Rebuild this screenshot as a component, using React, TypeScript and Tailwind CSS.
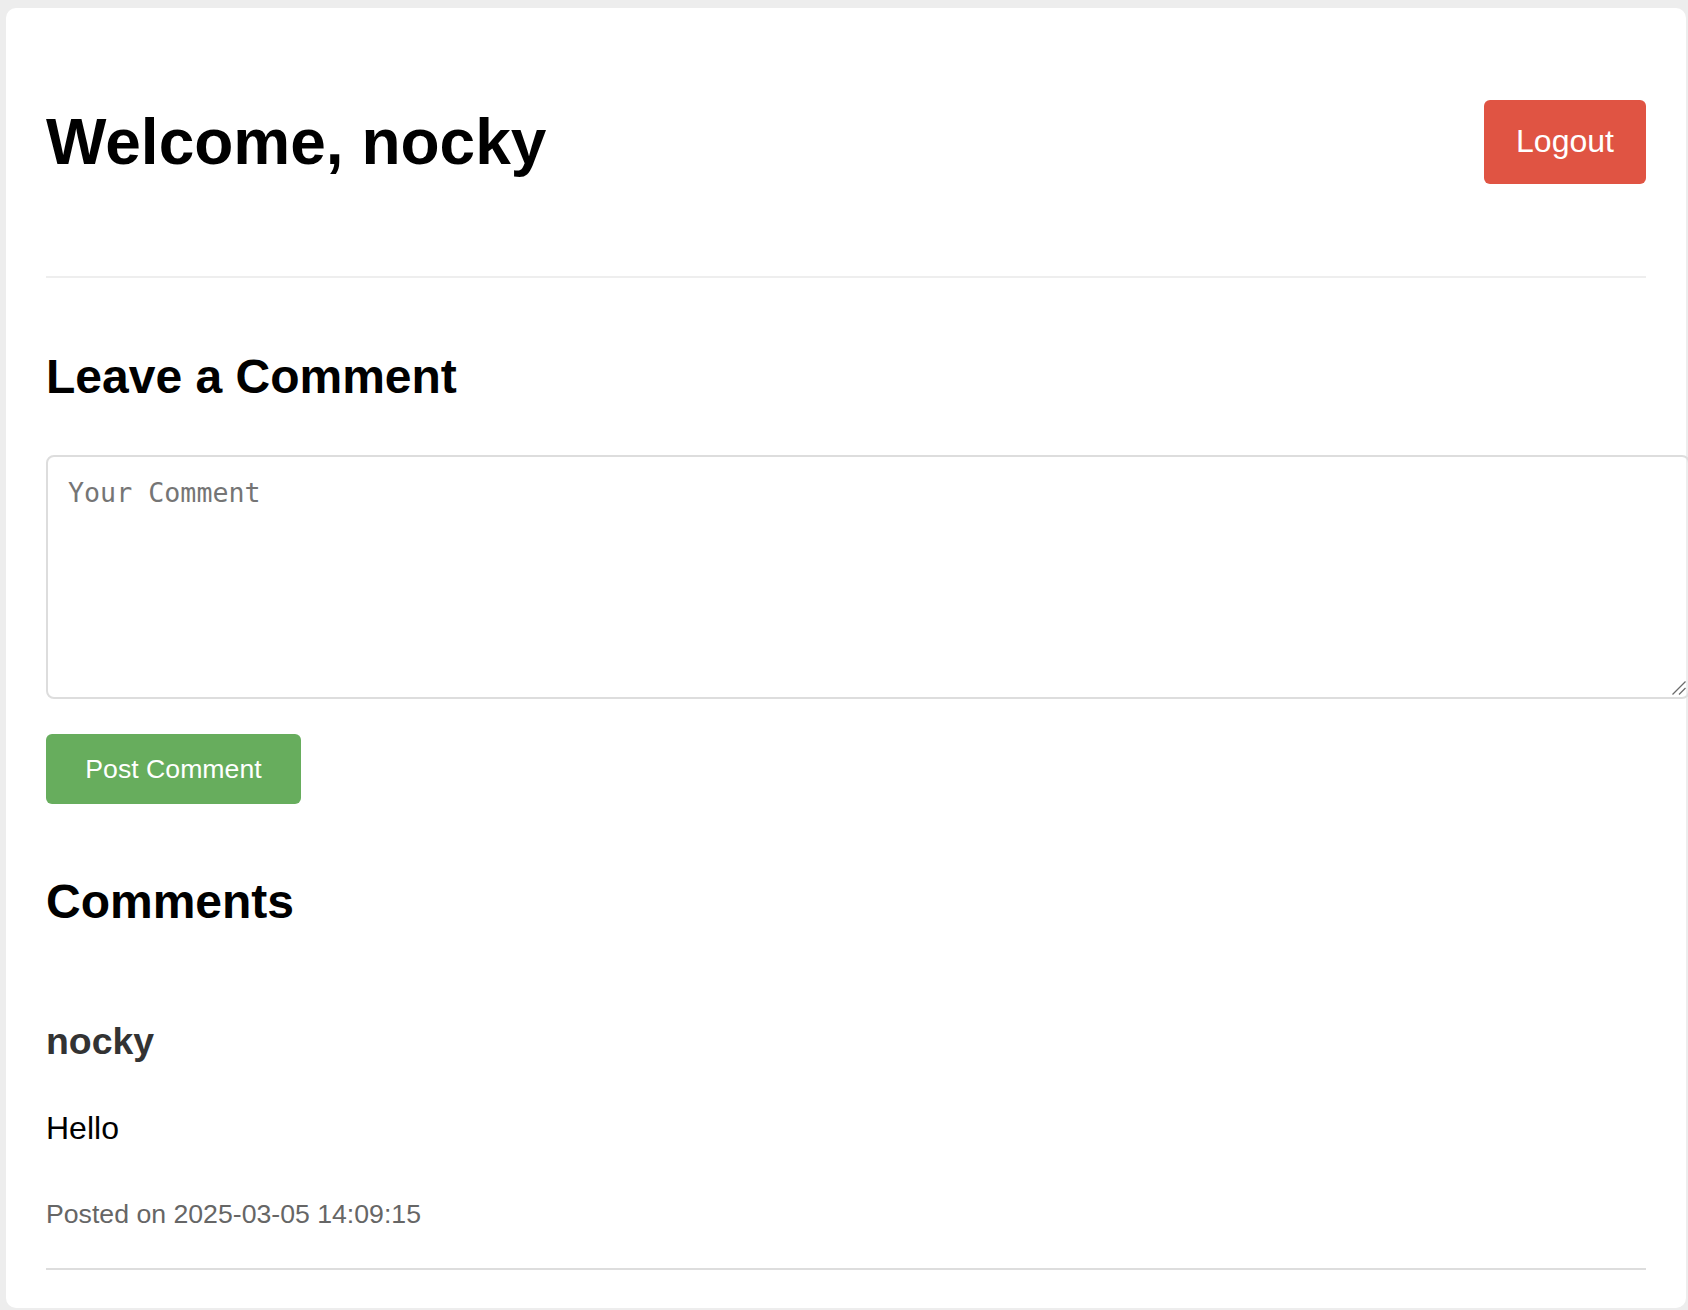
import React from "react";

export default function App() {
  return (
    <div
      className="w-[1688px] h-[1310px] overflow-hidden bg-[#ededed] pt-[8px] pl-[6px]"
      style={{ fontFamily: '"Liberation Sans", Arial, Helvetica, sans-serif' }}
    >
      <div className="w-[1680px] h-[1300px] bg-white rounded-[10px] px-[40px] pt-[40px] pb-[39px] flex flex-col">
        <header className="h-[230px] shrink-0 flex items-center justify-between pb-[40px] border-b-2 border-[#eeeeee]">
          <h1 className="text-[64px] leading-[74px] font-bold text-black">Welcome, nocky</h1>
          <button className="w-[162px] h-[84px] rounded-[6px] bg-[#e05443] text-white text-[32px] leading-[37px] pb-[2px]">
            Logout
          </button>
        </header>

        <h2 className="mt-[71px] text-[48px] leading-[55px] font-bold text-black">Leave a Comment</h2>

        <div className="relative mt-[51px] w-[1644px] h-[244px] shrink-0">
          <textarea
            className="block w-full h-full border-2 border-[#dddddd] rounded-[8px] p-[20px] text-[26.67px] leading-[31px] text-black placeholder:text-[#757575] outline-none resize-none"
            style={{ fontFamily: '"DejaVu Sans Mono", Menlo, monospace' }}
            placeholder="Your Comment"
          />
          <svg
            className="absolute left-[1626px] top-[226px] pointer-events-none"
            width="14"
            height="14"
            viewBox="0 0 14 14"
          >
            <line x1="0.5" y1="13.5" x2="13.5" y2="0.5" stroke="#6b6b6b" strokeWidth="1.3" />
            <line x1="7" y1="13.5" x2="13.5" y2="7" stroke="#6b6b6b" strokeWidth="1.3" />
          </svg>
        </div>

        <button className="mt-[35px] self-start w-[255px] h-[70px] shrink-0 rounded-[6px] bg-[#67ad5d] text-white text-[26.67px] leading-[31px]">
          Post Comment
        </button>

        <h2 className="mt-[70px] text-[48px] leading-[55px] font-bold text-black">Comments</h2>

        <div className="mt-[91px] flex flex-col pb-[38px] border-b-2 border-[#dddddd]">
          <h3 className="text-[37.44px] leading-[43px] font-bold text-[#333333]">nocky</h3>
          <p className="mt-[47px] text-[32px] leading-[37px] text-black">Hello</p>
          <p className="mt-[52px] text-[26.67px] leading-[31px] text-[#666666]">Posted on 2025-03-05 14:09:15</p>
        </div>
      </div>
    </div>
  );
}
